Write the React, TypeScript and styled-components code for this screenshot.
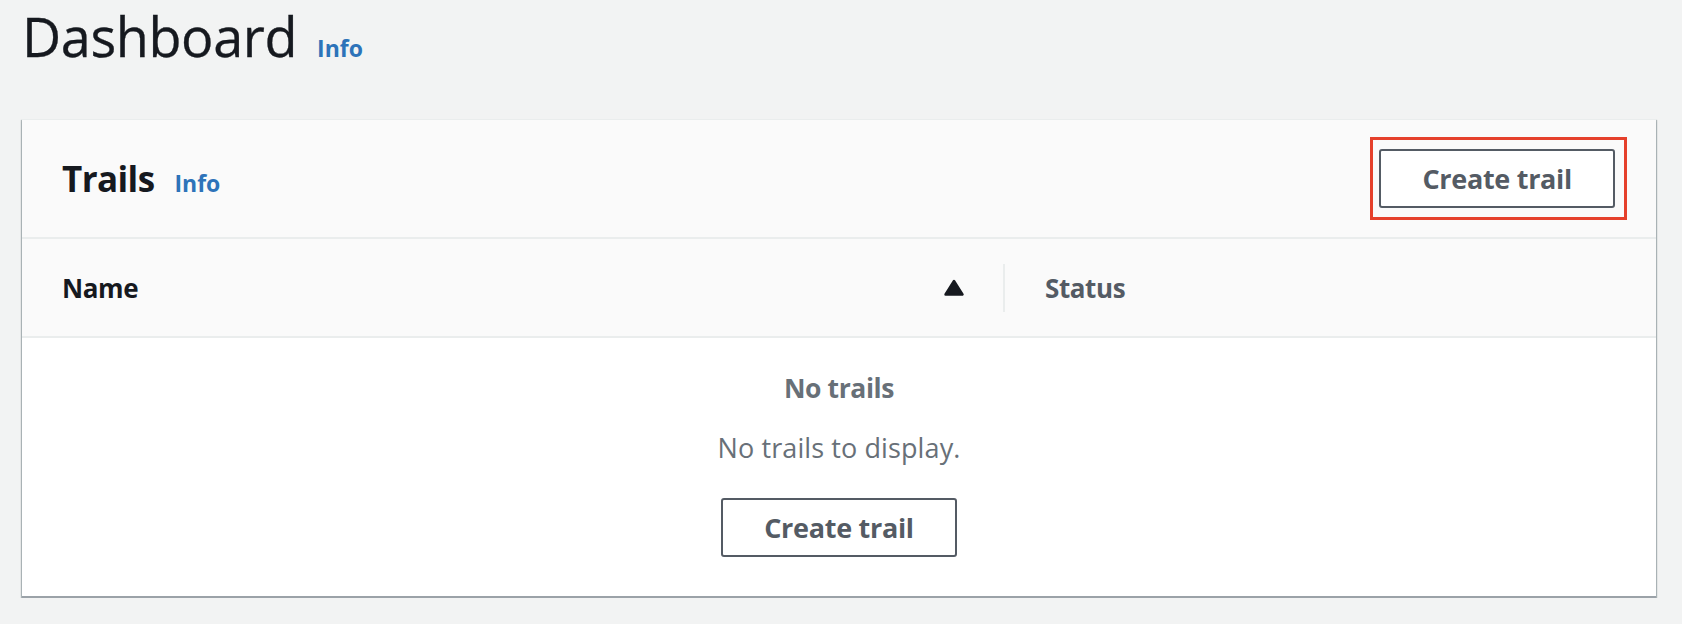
import React from "react";
import styled, { createGlobalStyle } from "styled-components";

const GlobalStyle = createGlobalStyle`
  html, body {
    margin: 0;
    padding: 0;
    background: #f2f3f3;
    min-height: 100%;
  }
  body {
    font-family: "Open Sans", "Noto Sans", Arial, sans-serif;
    color: #16191f;
  }
  * { box-sizing: border-box; }
`;

const Page = styled.div`
  padding: 4px 26px 0 22px;
  display: flex;
  flex-direction: column;
`;

const TitleRow = styled.div`
  display: flex;
  align-items: baseline;
  gap: 20px;
  height: 65px;
`;

const Title = styled.h1`
  margin: 0;
  font-size: 54px;
  line-height: 65px;
  font-weight: 400;
  color: #16191f;
  letter-spacing: -0.4px;
  -webkit-text-stroke: 0.3px #16191f;
`;

const InfoLink = styled.a<{ $size: number }>`
  font-size: ${(p) => p.$size}px;
  font-weight: 700;
  color: #2d73b9;
  text-decoration: none;
  cursor: pointer;
`;

const Card = styled.section`
  margin-top: 50px;
  background: #ffffff;
  border-top: 1px solid #eaeded;
  border-bottom: 2px solid #9ba2a8;
  box-shadow: 0 2px 2px 0 rgba(0, 28, 36, 0.2),
    1px 1px 1px 0 rgba(0, 28, 36, 0.25),
    -1px 1px 1px 0 rgba(0, 28, 36, 0.25);
`;

const CardHeader = styled.header`
  background: #fafafa;
  height: 119px;
  border-bottom: 2px solid #eaeded;
  display: flex;
  align-items: center;
  justify-content: space-between;
  padding: 0 41px 0 40px;
`;

const HeadingGroup = styled.div`
  display: flex;
  align-items: baseline;
  gap: 20px;
`;

const Heading = styled.h2`
  margin: 0;
  font-size: 35px;
  line-height: 44px;
  font-weight: 700;
  color: #16191f;
  letter-spacing: -0.6px;
`;

const Highlight = styled.div`
  position: relative;
  display: flex;
`;

const HighlightFrame = styled.span`
  position: absolute;
  top: -12px;
  bottom: -12px;
  left: -9px;
  right: -12px;
  border: 3px solid #e5402b;
  pointer-events: none;
`;

const Button = styled.button`
  height: 59px;
  padding: 0 41px;
  background: #ffffff;
  border: 2px solid #545b64;
  border-radius: 3px;
  font-family: "Open Sans", "Noto Sans", Arial, sans-serif;
  font-size: 27px;
  line-height: 36px;
  font-weight: 700;
  color: #545b64;
  letter-spacing: -0.3px;
  cursor: pointer;
`;

const TableHead = styled.div`
  display: grid;
  grid-template-columns: 981px 2px 1fr;
  align-items: center;
  height: 99px;
  background: #fafafa;
  border-bottom: 2px solid #eaeded;
`;

const HeadCell = styled.div<{ $muted?: boolean }>`
  display: flex;
  align-items: center;
  justify-content: space-between;
  padding: 0 39px 0 40px;
  font-size: 26px;
  line-height: 36px;
  font-weight: 700;
  letter-spacing: -0.4px;
  color: ${(p) => (p.$muted ? "#545b64" : "#16191f")};
`;

const ColumnDivider = styled.span`
  width: 2px;
  height: 48px;
  background: #eaeded;
`;

const SortIcon = styled.svg`
  width: 20px;
  height: 17px;
  display: block;
`;

const Empty = styled.div`
  display: flex;
  flex-direction: column;
  align-items: center;
  padding: 32px 0 39px;
  color: #687078;
`;

const EmptyTitle = styled.div`
  font-size: 26.5px;
  line-height: 36px;
  font-weight: 700;
  letter-spacing: -0.4px;
`;

const EmptyText = styled.p`
  margin: 24px 0 32px;
  font-size: 27px;
  line-height: 36px;
  font-weight: 400;
  letter-spacing: 0.1px;
`;

export default function App() {
  return (
    <>
      <GlobalStyle />
      <Page>
        <TitleRow>
          <Title>Dashboard</Title>
          <InfoLink $size={23}>Info</InfoLink>
        </TitleRow>
        <Card>
          <CardHeader>
            <HeadingGroup>
              <Heading>Trails</Heading>
              <InfoLink $size={23}>Info</InfoLink>
            </HeadingGroup>
            <Highlight>
              <Button>Create trail</Button>
              <HighlightFrame />
            </Highlight>
          </CardHeader>
          <TableHead>
            <HeadCell>
              <span>Name</span>
              <SortIcon viewBox="0 0 20 17" aria-hidden="true">
                <polygon
                  points="10,2 18.5,15.5 1.5,15.5"
                  fill="#16191f"
                  stroke="#16191f"
                  strokeWidth="2.4"
                  strokeLinejoin="round"
                />
              </SortIcon>
            </HeadCell>
            <ColumnDivider />
            <HeadCell $muted>
              <span>Status</span>
            </HeadCell>
          </TableHead>
          <Empty>
            <EmptyTitle>No trails</EmptyTitle>
            <EmptyText>No trails to display.</EmptyText>
            <Button>Create trail</Button>
          </Empty>
        </Card>
      </Page>
    </>
  );
}
